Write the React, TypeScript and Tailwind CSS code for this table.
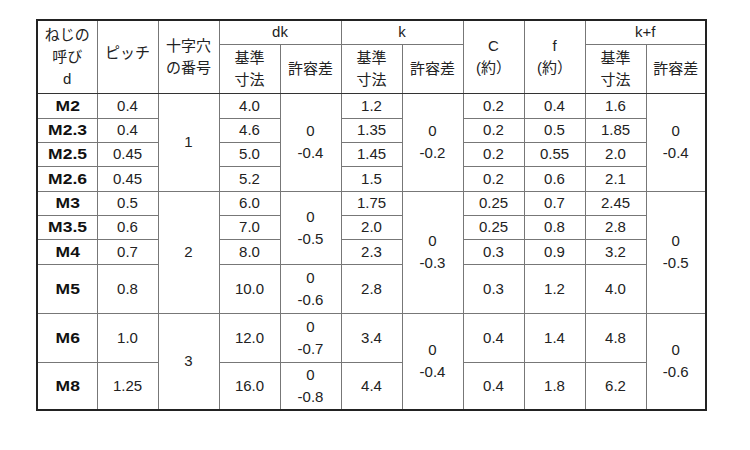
const rows = [
  { m: "M2", p: "0.4", dk: "4.0", k: "1.2", c: "0.2", f: "0.4", kf: "1.6", h: 25 },
  { m: "M2.3", p: "0.4", dk: "4.6", k: "1.35", c: "0.2", f: "0.5", kf: "1.85", h: 24 },
  { m: "M2.5", p: "0.45", dk: "5.0", k: "1.45", c: "0.2", f: "0.55", kf: "2.0", h: 24 },
  { m: "M2.6", p: "0.45", dk: "5.2", k: "1.5", c: "0.2", f: "0.6", kf: "2.1", h: 25 },
  { m: "M3", p: "0.5", dk: "6.0", k: "1.75", c: "0.25", f: "0.7", kf: "2.45", h: 24 },
  { m: "M3.5", p: "0.6", dk: "7.0", k: "2.0", c: "0.25", f: "0.8", kf: "2.8", h: 24 },
  { m: "M4", p: "0.7", dk: "8.0", k: "2.3", c: "0.3", f: "0.9", kf: "3.2", h: 25 },
  { m: "M5", p: "0.8", dk: "10.0", k: "2.8", c: "0.3", f: "1.2", kf: "4.0", h: 49 },
  { m: "M6", p: "1.0", dk: "12.0", k: "3.4", c: "0.4", f: "1.4", kf: "4.8", h: 49 },
  { m: "M8", p: "1.25", dk: "16.0", k: "4.4", c: "0.4", f: "1.8", kf: "6.2", h: 48 },
];

// spans keyed by starting row index
const cross: Record<number, [string, number]> = { 0: ["1", 4], 4: ["2", 4], 8: ["3", 2] };
const dkTol: Record<number, [string, number]> = {
  0: ["-0.4", 4],
  4: ["-0.5", 3],
  7: ["-0.6", 1],
  8: ["-0.7", 1],
  9: ["-0.8", 1],
};
const kTol: Record<number, [string, number]> = { 0: ["-0.2", 4], 4: ["-0.3", 4], 8: ["-0.4", 2] };
const kfTol: Record<number, [string, number]> = { 0: ["-0.4", 4], 4: ["-0.5", 4], 8: ["-0.6", 2] };

const td = "border border-[#777] p-0 text-center align-middle";
const th = `${td} border-b-[#333]`;

const Tol = ({ v }: { v: string }) => (
  <>
    0
    <br />
    {v}
  </>
);

export default function App() {
  return (
    <div className="w-[750px] h-[450px] bg-white pt-[19px] pl-[36px]">
      <table
        className="w-[669px] table-fixed border-collapse border-2 border-[#222] text-[15px] leading-[22px] text-[#222]"
        style={{ fontFamily: '"Liberation Sans", "Noto Sans CJK JP", sans-serif' }}
      >
        <colgroup>
          <col className="w-[60px]" />
          <col className="w-[61px]" />
          <col className="w-[61px]" />
          <col className="w-[61px]" />
          <col className="w-[61px]" />
          <col className="w-[61px]" />
          <col className="w-[61px]" />
          <col className="w-[61px]" />
          <col className="w-[61px]" />
          <col className="w-[61px]" />
          <col className="w-[60px]" />
        </colgroup>
        <thead>
          <tr className="h-[24px]">
            <td rowSpan={2} className={th}>
              ねじの
              <br />
              呼び
              <br />d
            </td>
            <td rowSpan={2} className={th}>
              <span className="relative -top-[4px]">ピッチ</span>
            </td>
            <td rowSpan={2} className={th}>
              十字穴
              <br />
              の番号
            </td>
            <td colSpan={2} className={td}>dk</td>
            <td colSpan={2} className={td}>k</td>
            <td rowSpan={2} className={th}>
              C
              <br />
              (約）
            </td>
            <td rowSpan={2} className={th}>
              f
              <br />
              (約）
            </td>
            <td colSpan={2} className={td}>k+f</td>
          </tr>
          <tr className="h-[49px]">
            <td className={th}>
              基準
              <br />
              寸法
            </td>
            <td className={th}>許容差</td>
            <td className={th}>
              基準
              <br />
              寸法
            </td>
            <td className={th}>許容差</td>
            <td className={th}>
              基準
              <br />
              寸法
            </td>
            <td className={th}>許容差</td>
          </tr>
        </thead>
        <tbody>
          {rows.map((r, i) => (
            <tr key={r.m} style={{ height: r.h }}>
              <td className={`${td} text-[14px] font-bold text-[#111]`}>
                <span className="inline-block scale-x-125">{r.m}</span>
              </td>
              <td className={td}>{r.p}</td>
              {cross[i] && (
                <td rowSpan={cross[i][1]} className={td}>
                  {cross[i][0]}
                </td>
              )}
              <td className={td}>{r.dk}</td>
              {dkTol[i] && (
                <td rowSpan={dkTol[i][1]} className={td}>
                  <Tol v={dkTol[i][0]} />
                </td>
              )}
              <td className={td}>{r.k}</td>
              {kTol[i] && (
                <td rowSpan={kTol[i][1]} className={td}>
                  <Tol v={kTol[i][0]} />
                </td>
              )}
              <td className={td}>{r.c}</td>
              <td className={td}>{r.f}</td>
              <td className={td}>{r.kf}</td>
              {kfTol[i] && (
                <td rowSpan={kfTol[i][1]} className={td}>
                  <Tol v={kfTol[i][0]} />
                </td>
              )}
            </tr>
          ))}
        </tbody>
      </table>
    </div>
  );
}
